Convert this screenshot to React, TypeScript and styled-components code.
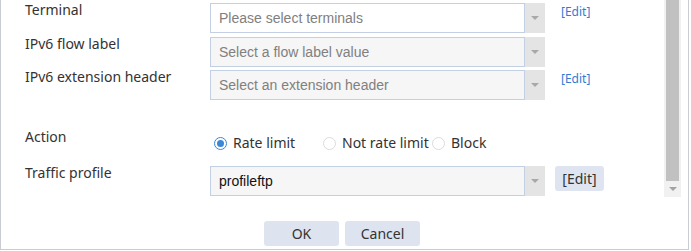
import styled, { createGlobalStyle } from "styled-components";

const GlobalStyle = createGlobalStyle`
  body {
    margin: 0;
    background: #ffffff;
  }
  * {
    box-sizing: border-box;
  }
`;

const Dialog = styled.div`
  width: 689px;
  height: 250px;
  border: 1px solid #c9ccd3;
  border-top: none;
  display: flex;
  flex-direction: column;
  font-family: "Noto Sans", "Open Sans", sans-serif;
  color: #333333;
`;

const Body = styled.div`
  height: 197px;
  display: flex;
  padding-right: 7px;
`;

const Form = styled.div`
  flex: 1;
  padding-left: 24px;
  overflow: hidden;
`;

const Row = styled.div<{ $height: number; $top?: number }>`
  display: flex;
  align-items: flex-start;
  height: ${(p) => p.$height}px;
  margin-top: ${(p) => p.$top ?? 0}px;
`;

const Label = styled.div`
  width: 185px;
  font-size: 14px;
  line-height: 20px;
  color: #333333;
`;

const SelectWrap = styled.div`
  display: flex;
  width: 335px;
  height: 30px;
  margin-top: 3px;
`;

const SelectBox = styled.div<{ $disabled?: boolean }>`
  flex: 1;
  border: 1px solid #c3d0e4;
  background: ${(p) => (p.$disabled ? "#f6f6f6" : "#ffffff")};
  display: flex;
  align-items: center;
  padding-left: 8px;
  font-family: "Liberation Sans", Arial, sans-serif;
  font-size: 14px;
`;

const Placeholder = styled.span`
  color: #808080;
`;

const Value = styled.span`
  color: #111111;
`;

const ArrowButton = styled.div`
  width: 20px;
  background: #e4e4e4;
  display: flex;
  align-items: center;
  justify-content: center;
  &::after {
    content: "";
    border-left: 4px solid transparent;
    border-right: 4px solid transparent;
    border-top: 4px solid #a8a8a8;
  }
`;

const EditLink = styled.a`
  margin-left: 16px;
  margin-top: 5px;
  font-size: 12px;
  line-height: 14px;
  color: #2f7cd6;
  text-decoration: none;
  cursor: pointer;
`;

const EditButton = styled.button`
  margin-left: 10px;
  margin-top: 3px;
  width: 49px;
  height: 25px;
  border: none;
  border-radius: 3px;
  background: #dfe5f0;
  font-family: "Noto Sans", sans-serif;
  font-size: 14px;
  color: #333333;
  padding: 0;
`;

const RadioGroup = styled.div`
  display: flex;
  padding-top: 6px;
  padding-left: 4px;
`;

const RadioOption = styled.label<{ $width?: number }>`
  display: flex;
  align-items: center;
  gap: 6px;
  width: ${(p) => (p.$width ? `${p.$width}px` : "auto")};
  font-size: 14px;
  line-height: 20px;
  color: #333333;
  white-space: nowrap;
`;

const RadioDot = styled.span<{ $checked?: boolean }>`
  width: 13px;
  height: 13px;
  border-radius: 50%;
  border: 1px solid ${(p) => (p.$checked ? "#3a86d8" : "#dcdcdc")};
  background: #ffffff;
  display: flex;
  align-items: center;
  justify-content: center;
  flex-shrink: 0;
  &::after {
    content: "";
    width: 7px;
    height: 7px;
    border-radius: 50%;
    background: ${(p) => (p.$checked ? "#3a86d8" : "transparent")};
  }
`;

const ScrollTrack = styled.div`
  width: 17px;
  margin-left: 1px;
  background: #f1f1f1;
  display: flex;
  flex-direction: column;
`;

const ScrollThumb = styled.div`
  flex: 1;
  margin: 0 2px;
  background: #c1c1c1;
`;

const ScrollArrow = styled.div`
  height: 16px;
  display: flex;
  align-items: center;
  justify-content: center;
  &::after {
    content: "";
    border-left: 4px solid transparent;
    border-right: 4px solid transparent;
    border-top: 4px solid #a3a3a3;
  }
`;

const Footer = styled.div`
  flex: 1;
  display: flex;
  justify-content: center;
  gap: 6px;
  padding-top: 24px;
  padding-right: 5px;
`;

const FooterButton = styled.button`
  width: 75px;
  height: 25px;
  border: none;
  border-radius: 3px;
  background: #dde4ef;
  font-family: "Noto Sans", sans-serif;
  font-size: 14px;
  color: #333333;
  padding: 0;
`;

interface IField {
  label: string;
  placeholder: string;
  disabled: boolean;
  edit: boolean;
}

const fields: IField[] = [
  { label: "Terminal", placeholder: "Please select terminals", disabled: false, edit: true },
  { label: "IPv6 flow label", placeholder: "Select a flow label value", disabled: true, edit: false },
  { label: "IPv6 extension header", placeholder: "Select an extension header", disabled: true, edit: true },
];

const actions = [
  { name: "Rate limit", checked: true, width: 109 },
  { name: "Not rate limit", checked: false, width: 109 },
  { name: "Block", checked: false },
];

const App = () => {
  return (
    <>
      <GlobalStyle />
      <Dialog>
        <Body>
          <Form>
            {fields.map((f) => (
              <Row key={f.label} $height={33.5}>
                <Label>{f.label}</Label>
                <SelectWrap>
                  <SelectBox $disabled={f.disabled}>
                    <Placeholder>{f.placeholder}</Placeholder>
                  </SelectBox>
                  <ArrowButton />
                </SelectWrap>
                {f.edit && <EditLink>[Edit]</EditLink>}
              </Row>
            ))}
            <Row $height={36} $top={26.5}>
              <Label>Action</Label>
              <RadioGroup>
                {actions.map((a) => (
                  <RadioOption key={a.name} $width={a.width}>
                    <RadioDot $checked={a.checked} />
                    {a.name}
                  </RadioOption>
                ))}
              </RadioGroup>
            </Row>
            <Row $height={34}>
              <Label>Traffic profile</Label>
              <SelectWrap>
                <SelectBox $disabled>
                  <Value>profileftp</Value>
                </SelectBox>
                <ArrowButton />
              </SelectWrap>
              <EditButton>[Edit]</EditButton>
            </Row>
          </Form>
          <ScrollTrack>
            <ScrollThumb />
            <ScrollArrow />
          </ScrollTrack>
        </Body>
        <Footer>
          <FooterButton>OK</FooterButton>
          <FooterButton>Cancel</FooterButton>
        </Footer>
      </Dialog>
    </>
  );
};

export default App;
